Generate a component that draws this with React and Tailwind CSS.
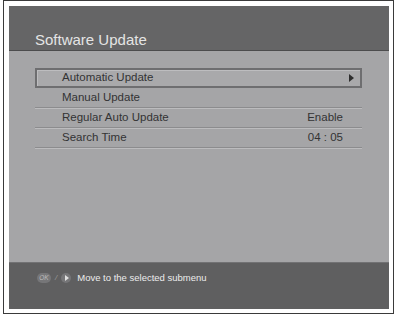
import React from 'react';

const items = [
  { label: 'Automatic Update', selected: true },
  { label: 'Manual Update' },
  { label: 'Regular Auto Update', value: 'Enable' },
  { label: 'Search Time', value: '04 : 05' },
];

const MenuRow = ({ item }) => {
  if (item.selected) {
    return (
      <div className="h-[20px] flex items-center border-2 border-[#6e6e70] shadow-[inset_1px_1px_0_#bdbdbf] bg-[#a9a9ab] pl-[25px] pr-[6px]">
        <span className="flex-1">{item.label}</span>
        <span className="w-0 h-0 border-y-[4px] border-y-transparent border-l-[5px] border-l-[#2e2e2e]" />
      </div>
    );
  }
  return (
    <div className="h-[20px] flex items-center pl-[27px] pr-[19px] border-b border-[#8c8c8e] shadow-[0_1px_0_#bcbcbe]">
      <span className="flex-1">{item.label}</span>
      {item.value && <span>{item.value}</span>}
    </div>
  );
};

export default function App() {
  return (
    <div className="w-[396px] h-[315px] bg-white" style={{ fontFamily: '"Liberation Sans", Arial, sans-serif' }}>
      <div className="ml-[3px] w-[391px] h-[314px] border border-[#3a3a3a] pl-[5px] pt-[5px]">
        <div className="w-[380px] h-[303px] flex flex-col">
          {/* Title bar */}
          <div className="h-[44px] bg-[#656566] pl-[26px] pt-[24px] text-[15px] leading-[20px] text-[#e4e4e4]">
            Software Update
          </div>
          <div className="h-[1px] bg-[#4c4c4d]" />

          {/* Menu body */}
          <div className="flex-1 bg-[#a5a5a7] pt-[17px] pl-[26px]">
            <div className="w-[327px] text-[11.5px] text-[#333334] flex flex-col gap-[0px]">
              {items.map((item) => (
                <MenuRow key={item.label} item={item} />
              ))}
            </div>
          </div>

          {/* Help bar */}
          <div className="h-[47px] bg-[#5f5f60] border-t border-[#727274] pl-[28px] pt-[9px]">
            <div className="flex items-center h-[12px] text-[9.5px] text-[#ececec]">
              <span className="w-[14px] h-[10px] rounded-full bg-[#767678] flex items-center justify-center text-[6.5px] italic text-[#bdbdbd] leading-none">
                OK
              </span>
              <span className="ml-[4px] text-[#9a9a9a] text-[8px] italic">/</span>
              <span className="ml-[4px] w-[10px] h-[10px] rounded-full bg-[#767678] flex items-center justify-center">
                <span className="ml-[1px] w-0 h-0 border-y-[3px] border-y-transparent border-l-[4px] border-l-[#e0e0e0]" />
              </span>
              <span className="ml-[6px]">Move to the selected submenu</span>
            </div>
          </div>
        </div>
      </div>
    </div>
  );
}
